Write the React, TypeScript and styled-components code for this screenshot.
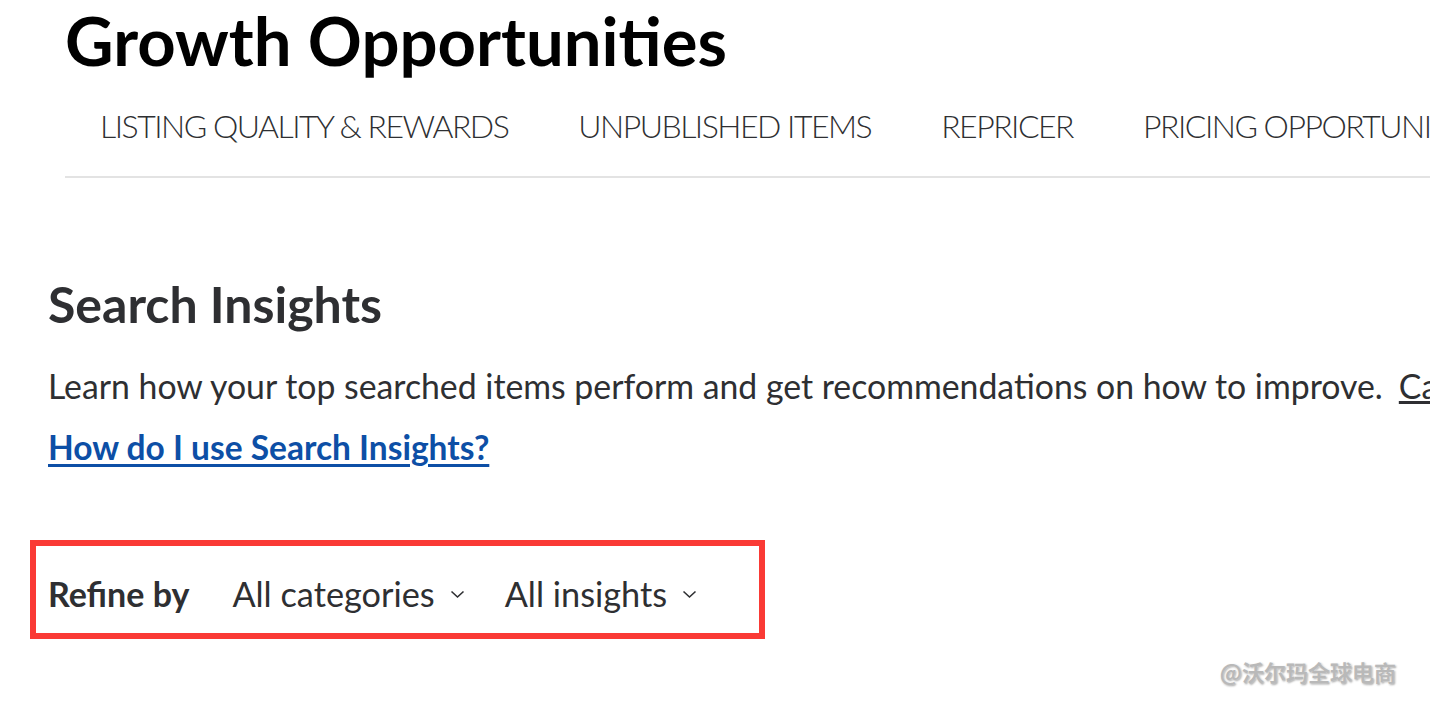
import React from "react";
import styled, { createGlobalStyle } from "styled-components";

const GlobalStyle = createGlobalStyle`
  html, body {
    margin: 0;
    padding: 0;
    background: #ffffff;
    overflow: hidden;
  }
  body {
    font-family: Lato, "Noto Sans", sans-serif;
    width: 1430px;
    height: 703px;
  }
`;

const Page = styled.div`
  position: relative;
  width: 1430px;
  height: 703px;
  overflow: hidden;
`;

const Header = styled.header`
  padding-left: 65px;
`;

const Title = styled.h1`
  margin: 0;
  padding-top: 2px;
  font-family: Lato, sans-serif;
  font-weight: 700;
  font-size: 67px;
  line-height: 76px;
  color: #000;
  white-space: nowrap;
`;

const Tabs = styled.nav`
  display: flex;
  gap: 70px;
  padding: 28px 0 0 35px;
  height: 100px;
  box-sizing: border-box;
  border-bottom: 2px solid #e3e3e3;
  white-space: nowrap;
`;

const Tab = styled.a`
  font-family: Lato, sans-serif;
  font-weight: 300;
  font-size: 32px;
  line-height: 40px;
  letter-spacing: -1.5px;
  color: #2e2f32;
  text-decoration: none;
`;

const Section = styled.section`
  display: flex;
  flex-direction: column;
  align-items: flex-start;
  padding: 96px 0 0 48px;
`;

const Heading = styled.h2`
  margin: 0;
  font-family: Lato, sans-serif;
  font-weight: 700;
  font-size: 50px;
  line-height: 60px;
  color: #2e2f32;
`;

const Lead = styled.p`
  margin: 30px 0 0;
  font-family: Lato, sans-serif;
  font-size: 33.8px;
  line-height: 44px;
  color: #2e2f32;
  white-space: nowrap;
`;

const InlineLink = styled.a`
  margin-left: 16px;
  color: #2e2f32;
  text-decoration: underline;
`;

const HelpLink = styled.a`
  margin-top: 17px;
  font-family: Lato, sans-serif;
  font-weight: 700;
  font-size: 33.5px;
  line-height: 44px;
  color: #0d4fa6;
  text-decoration: underline;
  text-decoration-thickness: 3px;
  text-underline-offset: 4px;
`;

const Highlight = styled.div`
  display: flex;
  margin: 71px 0 0 -18px;
  width: 735px;
  height: 99px;
  box-sizing: border-box;
  border: 6px solid #fa3a35;
  align-items: center;
  padding: 8px 0 0 12px;
  gap: 43px;
`;

const RefineLabel = styled.span`
  font-family: Lato, sans-serif;
  font-weight: 700;
  font-size: 34px;
  color: #2e2f32;
`;

const Filters = styled.div`
  display: flex;
  gap: 40px;
`;

const Select = styled.button`
  display: flex;
  align-items: center;
  gap: 15px;
  border: 0;
  background: none;
  padding: 0;
  font-family: Lato, sans-serif;
  font-size: 34.3px;
  color: #2e2f32;
  cursor: pointer;
`;

const Watermark = styled.div`
  position: absolute;
  right: 34px;
  bottom: 16px;
  font-family: "Noto Sans CJK SC", sans-serif;
  font-size: 22px;
  font-weight: 700;
  color: #b9b9b9;
  text-shadow: 0 0 3px #fff, 1px 1px 2px #8a8a8a;
`;

const Chevron = () => (
  <svg width="15" height="10" viewBox="0 0 15 10" fill="none">
    <path d="M1.5 2.5 L7.5 8 L13.5 2.5" stroke="#2e2f32" strokeWidth="1.6" />
  </svg>
);

const tabs = [
  "LISTING QUALITY & REWARDS",
  "UNPUBLISHED ITEMS",
  "REPRICER",
  "PRICING OPPORTUNITIES",
];

export default function App() {
  return (
    <Page>
      <GlobalStyle />
      <Header>
        <Title>Growth Opportunities</Title>
        <Tabs>
          {tabs.map((t) => (
            <Tab key={t}>{t}</Tab>
          ))}
        </Tabs>
      </Header>
      <Section>
        <Heading>Search Insights</Heading>
        <Lead>
          Learn how your top searched items perform and get recommendations on
          how to improve.
          <InlineLink>Catalog</InlineLink>
        </Lead>
        <HelpLink>How do I use Search Insights?</HelpLink>
        <Highlight>
          <RefineLabel>Refine by</RefineLabel>
          <Filters>
            <Select>
              All categories <Chevron />
            </Select>
            <Select>
              All insights <Chevron />
            </Select>
          </Filters>
        </Highlight>
      </Section>
      <Watermark>@沃尔玛全球电商</Watermark>
    </Page>
  );
}
